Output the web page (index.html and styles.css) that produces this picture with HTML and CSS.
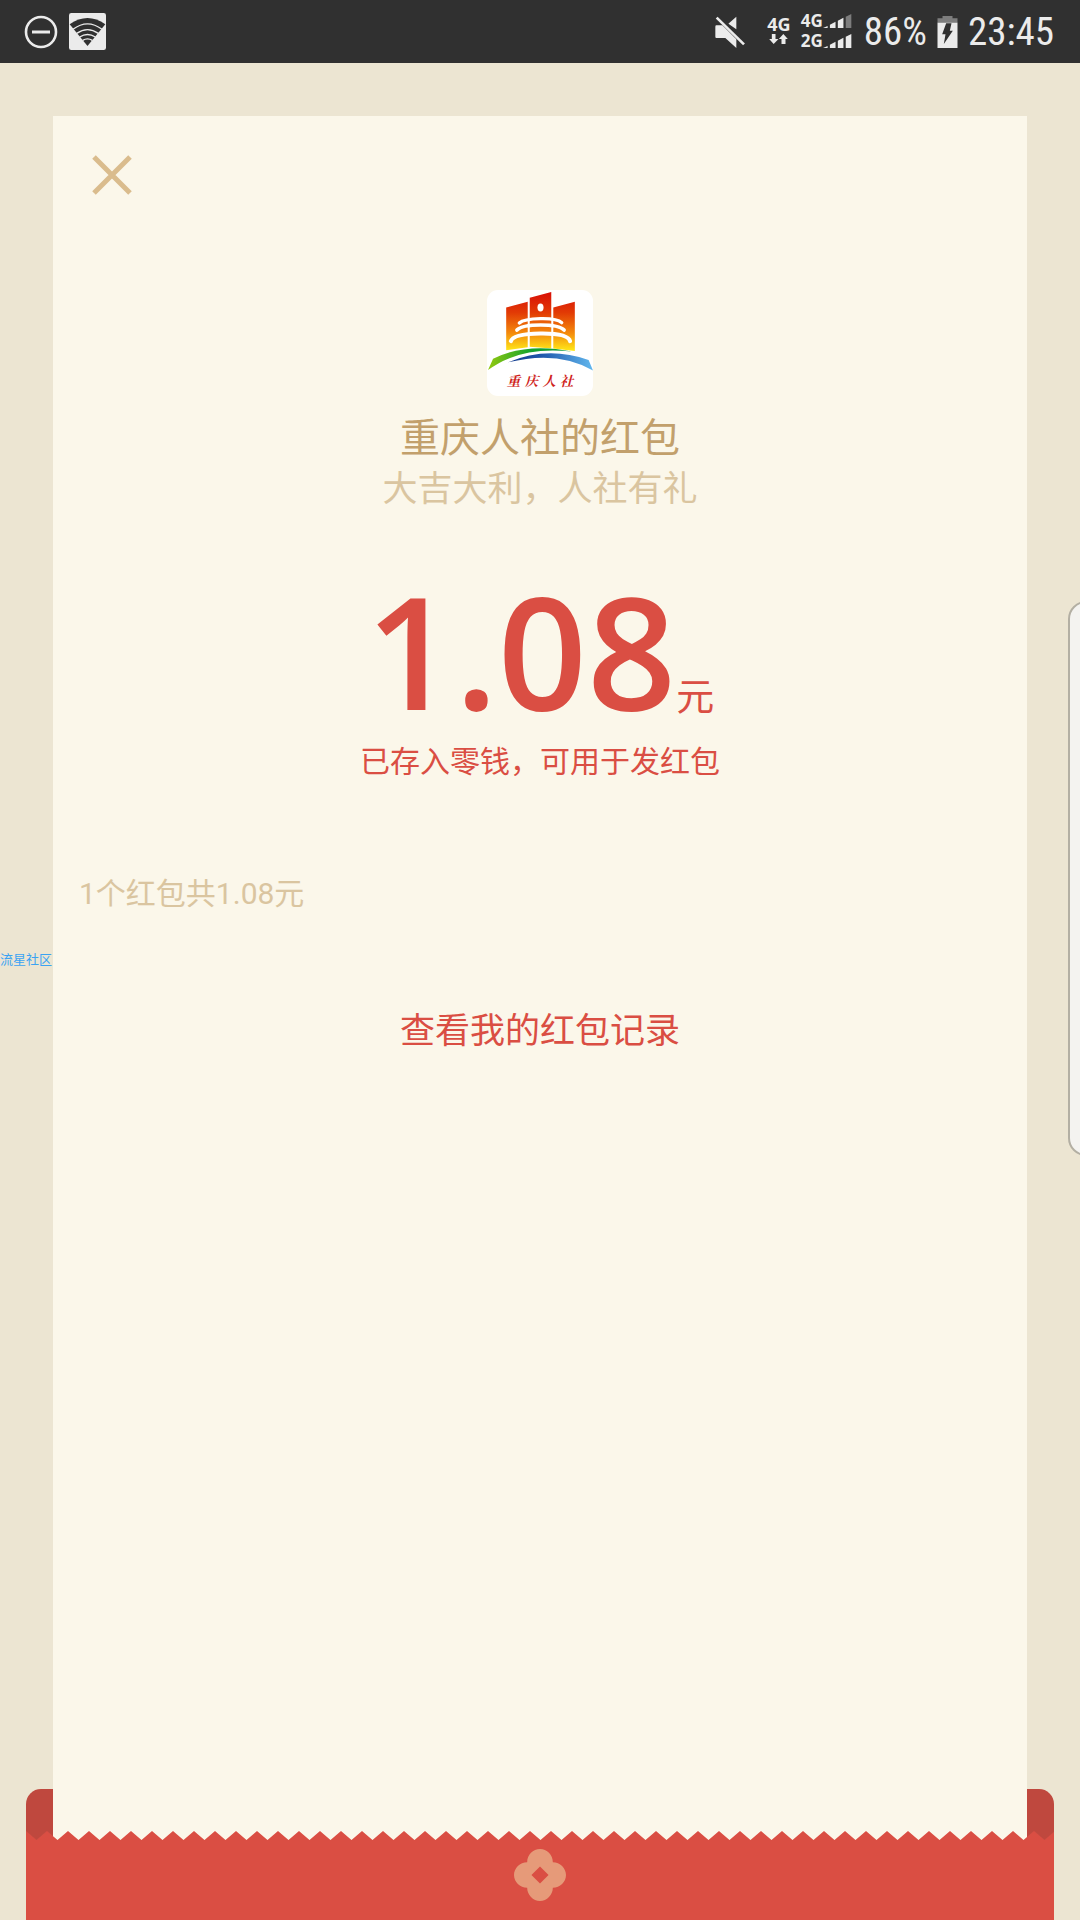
FILE: index.html
```
<!DOCTYPE html>
<html lang="zh-CN">

<head>
  <meta charset="UTF-8">
  <meta name="viewport" content="width=device-width, initial-scale=1.0">
  <title>红包详情</title>
  <link rel="stylesheet" href="styles.css">
</head>

<body>
  <header class="status">
    <div class="status-left">
      <svg class="icon-block" viewBox="0 0 34 34">
        <circle cx="17" cy="17" r="15" fill="none" stroke="#ebebeb" stroke-width="2.6" />
        <path d="M8 17h18" stroke="#ebebeb" stroke-width="3" />
      </svg>
      <svg class="icon-wifi" viewBox="0 0 111 111">
        <rect width="111" height="111" rx="7" fill="#ebebeb" />
        <path d="M55.500 99L2 34Q55.500-4 109 34Z" fill="#303030" />
        <g fill="none" stroke="#ebebeb" stroke-width="4">
          <path d="M12 49Q55.500 16 99 49" />
          <path d="M23 61Q55.500 39 88 61" />
          <path d="M32 72Q55.500 57 79 72" />
          <path d="M41 82Q55.500 73 70 82" />
        </g>
      </svg>
    </div>
    <div class="status-right">
      <svg class="icon-mute" viewBox="0 0 90 96">
        <path d="M4 28h18l42 42v26L31 66H4Q1 66 1 62V32Q1 28 4 28ZM64 2v38L40 23Z" fill="#ebebeb" />
        <path d="M10 0l82 80" stroke="#303030" stroke-width="8" />
        <path d="M5 5l82 80" stroke="#ebebeb" stroke-width="8" />
      </svg>
      <div class="data">
        <span>4G</span>
        <svg viewBox="0 0 56 30">
          <path d="M8 0h11v15h9L13.500 30 0 15h8ZM37 30h12V15h7L42.500 0 29 15h8Z" fill="#ebebeb" />
        </svg>
      </div>
      <div class="signal">
        <div class="signal-row">
          <span>4G</span>
          <svg viewBox="0 0 88 42">
            <path d="M0 42l14-6v6ZM21 42V32l17-9v19ZM45 42V20l17-9v31Z" fill="#ebebeb" />
            <path d="M69 42V8l17-8v42Z" fill="#7d7d7d" />
          </svg>
        </div>
        <div class="signal-row">
          <span>2G</span>
          <svg viewBox="0 0 88 42">
            <path d="M0 42l14-6v6ZM21 42V32l17-9v19ZM45 42V20l17-9v31ZM69 42V8l17-8v42Z" fill="#ebebeb" />
          </svg>
        </div>
      </div>
      <span class="status-text">86%</span>
      <svg class="icon-battery" viewBox="0 0 62 96">
        <path d="M16 0h30v7h15v13H1V7h15Z" fill="#7d7d7d" />
        <path d="M1 20h60v76H1Z" fill="#ebebeb" />
        <path d="M27 22h16l-5 22h9L20 84l5-29H15Z" fill="#303030" />
      </svg>
      <time class="status-text">23:45</time>
    </div>
  </header>

  <main class="envelope">
    <div class="back"></div>
    <section class="paper">
      <button class="close" type="button" aria-label="关闭">
        <svg viewBox="0 0 40 40">
          <path d="M2 2l36 36M38 2L2 38" stroke="#dabc8d" stroke-width="5" />
        </svg>
      </button>
      <svg class="logo" viewBox="51 30 315 315" role="img" aria-label="重庆人社">
        <defs>
          <linearGradient id="tower" x1="0" y1="36" x2="0" y2="210" gradientUnits="userSpaceOnUse">
            <stop offset="0" stop-color="#d80f08" />
            <stop offset=".35" stop-color="#e23a05" />
            <stop offset=".7" stop-color="#f48a0c" />
            <stop offset="1" stop-color="#ffe818" />
          </linearGradient>
          <linearGradient id="green">
            <stop offset="0" stop-color="#93c90f" />
            <stop offset=".5" stop-color="#16a32c" />
            <stop offset="1" stop-color="#0b9a3a" />
          </linearGradient>
          <linearGradient id="blue">
            <stop offset="0" stop-color="#123a8c" />
            <stop offset=".4" stop-color="#2058ac" />
            <stop offset="1" stop-color="#62b8ee" />
          </linearGradient>
        </defs>
        <rect x="51" y="30" width="315" height="315" fill="#fff" />
        <path d="M108 82l64-17v135l-64 9ZM178 53l64-17v168l-64-5ZM248 82l64-17v146l-64-7Z" fill="url(#tower)" />
        <ellipse cx="210" cy="82" rx="9" ry="12" fill="#fff" />
        <g fill="none" stroke="#fff" stroke-linecap="round">
          <path d="M147 128Q160 116 210 115T273 127" stroke-width="10" />
          <path d="M140 149Q154 134 210 134T280 149" stroke-width="11" />
          <path d="M122 182Q128 160 210 159T298 182" stroke-width="12" />
        </g>
        <path d="M54 268L69 234Q170 185 303 213Q150 196 54 268Z" fill="url(#green)" />
        <path d="M114 245Q230 195 353 238L366 269Q260 208 114 245Z" fill="url(#blue)" />
        <text class="logo-text" x="110 163 216 268" y="316">重庆人社</text>
      </svg>
      <h1 class="name">重庆人社的红包</h1>
      <p class="wish">大吉大利，人社有礼</p>
      <p class="amount"><span class="num">1.08</span><span class="unit">元</span></p>
      <p class="saved">已存入零钱，可用于发红包</p>
      <p class="total">1个红包共1.08元</p>
      <a class="record" href="#">查看我的红包记录</a>
    </section>
    <svg class="zigzag">
      <defs>
        <pattern id="teeth" width="21" height="9" patternUnits="userSpaceOnUse">
          <path d="M0 0L10.500 9 21 0V9H0Z" fill="#da4e43" />
        </pattern>
      </defs>
      <rect width="100%" height="9" fill="url(#teeth)" />
    </svg>
    <div class="pocket">
      <svg class="flower" viewBox="0 0 158 158">
        <path d="M40 40C40 18 58 0 79 0S118 18 118 40C140 40 158 58 158 79S140 118 118 118C118 140 100 158 79 158S40 140 40 118C18 118 0 100 0 79S18 40 40 40ZM79 53L53 79l26 26 26-26Z" fill="#e69a79" fill-rule="evenodd" />
      </svg>
    </div>
  </main>

  <div class="edge-panel"></div>
  <span class="watermark">流星社区</span>
</body>

</html>
```
FILE: styles.css
```
* {
  box-sizing: border-box;
}

body {
  margin: 0;
  min-height: 100vh;
  display: flex;
  flex-direction: column;
  position: relative;
  overflow-x: hidden;
  background: #ece5d2;
  font-family: Roboto, "Noto Sans CJK SC", sans-serif;
}

h1,
p {
  margin: 0;
  font-weight: 400;
}

svg {
  display: block;
}

/* status bar */
.status {
  height: 63px;
  padding: 0 26px 0 24px;
  display: flex;
  justify-content: space-between;
  align-items: center;
  background: #303030;
  color: #ebebeb;
}

.status-left,
.status-right {
  display: flex;
  align-items: center;
}

.status-left {
  gap: 11px;
}

.icon-block {
  width: 34px;
  height: 34px;
}

.icon-wifi {
  width: 37px;
  height: 37px;
}

.status-right {
  gap: 10px;
}

.icon-mute {
  width: 30px;
  height: 32px;
  margin-right: 12px;
}

.data,
.signal {
  font-family: "Open Sans", sans-serif;
  font-size: 18px;
  font-weight: 700;
  line-height: 20px;
}

.data {
  display: flex;
  flex-direction: column;
  align-items: center;
  padding-bottom: 6px;
}

.data svg {
  width: 19px;
  height: 10px;
}

.signal {
  margin-right: 2px;
  padding-bottom: 2px;
  font-size: 17px;
}

.signal-row {
  display: flex;
  align-items: center;
}

.signal-row svg {
  width: 29px;
  height: 14px;
}

.status-text {
  font-family: "Roboto Condensed", "Liberation Sans Narrow", Roboto, sans-serif;
  font-size: 39px;
  line-height: 62px;
}

.icon-battery {
  width: 21px;
  height: 32px;
}

/* red packet */
.envelope {
  flex: 1;
  display: grid;
  grid-template-columns: 26px 27px 1fr 27px 26px;
  grid-template-rows: 1fr 42px 9px 80px;
  padding-top: 53px;
}

.back {
  grid-area: 2 / 2 / 4 / 5;
  background: #bf483e;
  border-radius: 15px 15px 0 0;
}

.paper {
  grid-area: 1 / 3 / 4 / 4;
  display: flex;
  flex-direction: column;
  align-items: center;
  padding: 39px 26px;
  background: #fbf7ea;
  color: #da4e43;
}

.zigzag {
  grid-area: 3 / 2 / 4 / 5;
  width: 100%;
  height: 9px;
}

.pocket {
  grid-area: 4 / 2 / 5 / 5;
  display: flex;
  justify-content: center;
  padding-top: 9px;
  background: #da4e43;
}

.flower {
  width: 52px;
  height: 52px;
}

.close {
  align-self: flex-start;
  width: 40px;
  height: 40px;
  margin-left: 13px;
  padding: 0;
  border: none;
  background: none;
  cursor: pointer;
}

.logo {
  width: 106px;
  height: 106px;
  margin: 95px 0 18px;
  border-radius: 11px;
}

.logo-text {
  fill: #cf1f1c;
  font-family: "Noto Serif CJK SC", "Noto Sans CJK SC", serif;
  font-size: 40px;
  font-style: italic;
  font-weight: 700;
}

.name {
  color: #c2a06c;
  font-size: 40px;
  line-height: 50px;
}

.wish {
  color: #dac5a0;
  font-size: 35px;
  line-height: 52px;
}

.amount {
  display: flex;
  align-items: baseline;
  margin-top: 54px;
}

.num {
  font-family: "Open Sans", sans-serif;
  font-size: 156px;
  font-weight: 600;
  line-height: 160px;
}

.unit {
  font-size: 38px;
  line-height: 50px;
}

.saved {
  margin-top: 12px;
  font-size: 30px;
  line-height: 40px;
}

.total {
  align-self: flex-start;
  margin: 92px 0;
  color: #dac5a0;
  font-size: 30px;
  line-height: 40px;
}

.record {
  color: #da4e43;
  font-size: 35px;
  line-height: 52px;
  text-decoration: none;
}

/* floating over the page */
.edge-panel {
  position: absolute;
  top: 601px;
  right: -24px;
  width: 36px;
  height: 555px;
  border: 2px solid #b3afa3;
  border-radius: 18px;
  background: #f4f3f0;
}

.watermark {
  position: absolute;
  top: 950px;
  left: 0;
  color: #3ba3f2;
  font-size: 13px;
  line-height: 20px;
}
```
